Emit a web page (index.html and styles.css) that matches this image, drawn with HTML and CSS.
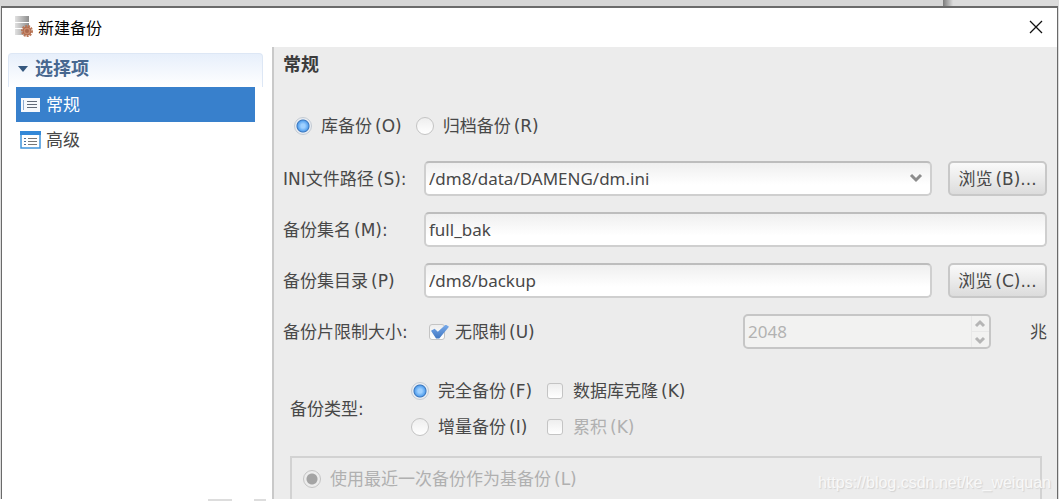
FILE: index.html
```
<!DOCTYPE html>
<html lang="zh-CN">
<head>
    <meta charset="UTF-8">
    <meta name="viewport" content="width=device-width, initial-scale=1.0">
    <title>新建备份</title>
    <link rel="stylesheet" href="styles.css">
</head>
<body>
    <div class="backdrop"></div>
    <div class="window">
        <header class="titlebar">
            <svg class="app-icon" width="20" height="22" viewBox="0 0 20 22" aria-hidden="true">
                <defs>
                    <linearGradient id="metal" x1="0" x2="1">
                        <stop offset="0" stop-color="#e2e2e2"/>
                        <stop offset="1" stop-color="#8d8d8d"/>
                    </linearGradient>
                </defs>
                <rect x="2" y="0" width="14" height="6" fill="url(#metal)"/>
                <rect x="2" y="7" width="14" height="5" fill="url(#metal)"/>
                <rect x="2" y="13" width="14" height="6" fill="url(#metal)"/>
                <circle cx="14" cy="15" r="4" fill="#c98a6c" stroke="#b0694a" stroke-width="1"/>
                <circle cx="14" cy="15" r="5" fill="none" stroke="#b97657" stroke-width="2" stroke-dasharray="2 1"/>
                <circle cx="14" cy="15" r="2" fill="#a9684d"/>
            </svg>
            <h1>新建备份</h1>
            <button class="close" type="button" aria-label="关闭">
                <svg width="14" height="14" viewBox="0 0 14 14"><path d="M1 1L13 13M13 1L1 13" fill="none" stroke="#111" stroke-width="1.3"/></svg>
            </button>
        </header>

        <div class="content">
            <nav class="sidebar">
                <h2>
                    <svg width="10" height="6" viewBox="0 0 10 6"><path d="M0 0H10L5 6Z" fill="#35587f"/></svg>
                    选择项
                </h2>
                <a class="item active" href="#general">
                    <svg width="21" height="18" viewBox="0 0 21 18">
                        <rect x="1" y="2" width="19" height="14" fill="#f6f8fc"/>
                        <path d="M3.5 4V14" stroke="#8fabd0"/>
                        <path d="M7 5.5H17M7 8.5H17M7 11.5H17" stroke="#626a78"/>
                    </svg>
                    常规
                </a>
                <a class="item" href="#advanced">
                    <svg width="21" height="18" viewBox="0 0 21 18">
                        <rect x="1" y="1" width="19" height="16" fill="#fff" stroke="#3f94dc" stroke-width="1.5"/>
                        <rect x="0" y="0" width="21" height="4" fill="#3388d8"/>
                        <path d="M4 7.5H6M4 10.5H6M4 13.5H6" stroke="#47709e"/>
                        <path d="M8 7.5H17M8 10.5H17M8 13.5H17" stroke="#777"/>
                    </svg>
                    高级
                </a>
            </nav>

            <main class="panel" id="general">
                <h2>常规</h2>

                <div class="choices">
                    <label class="choice"><input type="radio" name="target" checked><span>库备份<span class="key">(O)</span></span></label>
                    <label class="choice"><input type="radio" name="target"><span>归档备份<span class="key">(R)</span></span></label>
                </div>

                <div class="form">
                    <label for="ini">INI文件路径<span class="key">(S):</span></label>
                    <div class="field">
                        <div class="select">
                            <select id="ini"><option>/dm8/data/DAMENG/dm.ini</option></select>
                            <svg class="chevron" width="14" height="10" viewBox="0 0 14 10"><path d="M2 2L7 7L12 2" fill="none" stroke="#8c8c8c" stroke-width="3"/></svg>
                        </div>
                        <button class="browse" type="button">浏览<span class="key">(B)</span>...</button>
                    </div>

                    <label for="name">备份集名<span class="key">(M):</span></label>
                    <div class="field"><input class="text" id="name" type="text" value="full_bak"></div>

                    <label for="dir">备份集目录<span class="key">(P)</span></label>
                    <div class="field">
                        <input class="text" id="dir" type="text" value="/dm8/backup">
                        <button class="browse" type="button">浏览<span class="key">(C)</span>...</button>
                    </div>

                    <label for="size">备份片限制大小:</label>
                    <div class="field limit">
                        <label class="choice"><input type="checkbox" checked><span>无限制<span class="key">(U)</span></span></label>
                        <div class="spinner">
                            <input class="text" id="size" type="number" value="2048" disabled>
                            <svg class="arrows" width="18" height="31" viewBox="0 0 18 31">
                                <path d="M0.5 0V31M0 15.5H18" stroke="#e8e8e8"/>
                                <path d="M5 10L9 6L13 10M5 22L9 26L13 22" fill="none" stroke="#b5b5b5" stroke-width="3"/>
                            </svg>
                        </div>
                        <span class="unit">兆</span>
                    </div>
                </div>

                <div class="type">
                    <span>备份类型:</span>
                    <div class="type-grid">
                        <label class="choice"><input type="radio" name="type" checked><span>完全备份<span class="key">(F)</span></span></label>
                        <label class="choice"><input type="checkbox"><span>数据库克隆<span class="key">(K)</span></span></label>
                        <label class="choice"><input type="radio" name="type"><span>增量备份<span class="key">(I)</span></span></label>
                        <label class="choice"><input type="checkbox" disabled><span>累积<span class="key">(K)</span></span></label>
                    </div>
                </div>

                <div class="base">
                    <label class="choice"><input type="radio" name="base" checked disabled><span>使用最近一次备份作为基备份<span class="key">(L)</span></span></label>
                </div>
            </main>
        </div>
    </div>
    <div class="page-edge"></div>
    <div class="watermark">https://blog.csdn.net/ke_weiquan</div>
</body>
</html>
```

FILE: styles.css
```
* {
    box-sizing: border-box;
}
body {
    margin: 0;
    height: 100vh;
    overflow: hidden;
    display: flex;
    flex-direction: column;
    background-color: #dcdcdc;
    font-family: "DejaVu Sans", "Noto Sans CJK SC", sans-serif;
    font-size: 17px;
    line-height: 24px;
    color: #484848;
}
h1, h2 {
    margin: 0;
}
button, input, select {
    font: inherit;
    color: inherit;
}
.backdrop {
    height: 6px;
    flex: none;
    background: linear-gradient(90deg, #d6d6d6 89%, #777 89%, #dcdcdc 90%);
}
.window {
    flex: 1;
    min-height: 0;
    margin: 0 1px;
    display: flex;
    flex-direction: column;
    background-color: #fff;
    border: 1px solid #6a6a6a;
    border-width: 2px 1px 0;
}
.titlebar {
    height: 39px;
    flex: none;
    display: flex;
    align-items: center;
    padding: 0 13px 2px 11px;
    gap: 5px;
}
.titlebar h1 {
    flex: 1;
    font-family: "Noto Sans CJK SC", sans-serif;
    font-size: 16px;
    font-weight: 400;
    color: #000;
}
.close {
    display: flex;
    padding: 1px;
    border: none;
    background: none;
}
.content {
    flex: 1;
    min-height: 0;
    display: flex;
}
.sidebar {
    width: 270px;
    flex: none;
    padding: 6px 9px 0 6px;
}
.sidebar h2 {
    display: flex;
    align-items: center;
    gap: 7px;
    height: 34px;
    padding: 0 9px 4px;
    border: 1px solid #dde7f5;
    border-bottom: none;
    border-radius: 4px 4px 0 0;
    background: linear-gradient(#e7effb, #fff);
    font-size: 18px;
    color: #47678f;
}
.item {
    display: flex;
    align-items: center;
    gap: 5px;
    height: 35px;
    margin: 0 8px;
    padding: 0 4px;
    color: #484848;
    text-decoration: none;
}
.item.active {
    background-color: #3880cc;
    color: #fff;
}
.panel {
    flex: 1;
    min-width: 0;
    display: flex;
    flex-direction: column;
    padding: 6px 10px 0 9px;
    border-left: 2px solid #c9c9c9;
    background-color: #ececec;
}
.panel h2 {
    font-size: 18px;
    color: #3c3c3c;
}
.key {
    padding-left: 3px;
}
.choice {
    display: flex;
    align-items: center;
    gap: 9px;
    white-space: nowrap;
}
.choices {
    display: flex;
    gap: 14px;
    padding: 37px 0 23px 11px;
}
.choice input {
    appearance: none;
    flex: none;
    width: 18px;
    height: 18px;
    margin: 0;
    border: 1px solid #c4c4c4;
    background: linear-gradient(#eee, #fff);
}
.choice input[type="radio"] {
    border-radius: 50%;
}
.choice input[type="radio"]:checked {
    border-color: #c4cbd3;
    background: radial-gradient(circle at 50% 50%, #9ed0ff 0 2px, #5ba5f0 5px, #3a76bd 6px, #e9edf2 7px);
}
.choice input[type="radio"]:disabled {
    border-color: #c4c4c4;
    background: radial-gradient(circle, #a4a4a4 5px, #ececec 6px);
}
.choice input[type="checkbox"] {
    width: 16px;
    height: 16px;
    margin: 0 1px;
    border-radius: 3px;
}
.choice input[type="checkbox"]:checked::before {
    content: "";
    display: block;
    width: 18px;
    height: 14px;
    margin-left: 1px;
    background: linear-gradient(#78aaea, #3f75c0);
    clip-path: polygon(0 45%, 20% 30%, 38% 52%, 82% 0, 100% 16%, 46% 100%, 28% 100%);
}
.choice:has(:disabled) {
    color: #b0b0b0;
}
.form {
    display: grid;
    grid-template-columns: 141px 1fr;
    row-gap: 16px;
    align-items: center;
}
.field {
    display: flex;
    align-items: center;
    gap: 16px;
    min-width: 0;
}
.select, .spinner {
    position: relative;
    flex: 1;
}
.text, .select select {
    appearance: none;
    display: block;
    flex: 1;
    width: 100%;
    min-width: 0;
    height: 35px;
    padding: 0 3px;
    border: 2px solid #cfcfcf;
    border-top-color: #bdbdbd;
    border-radius: 5px;
    background: linear-gradient(#efefef, #fff 70%);
    font-family: "Noto Sans", sans-serif;
}
.chevron {
    position: absolute;
    right: 9px;
    top: 12px;
}
.browse {
    width: 99px;
    height: 35px;
    padding: 0;
    border: 2px solid #c8c8c8;
    border-radius: 5px;
    background: linear-gradient(#fafafa, #dcdcdc);
    white-space: nowrap;
}
.limit {
    padding-left: 4px;
    gap: 0;
}
.limit .choice {
    flex: 1;
}
.limit .spinner {
    flex: 0 0 248px;
}
.limit .text {
    background: #f2f2f1;
    border-color: #c6c6c6;
    color: #b2b2b2;
    appearance: textfield;
}
.arrows {
    position: absolute;
    right: 2px;
    top: 2px;
}
.unit {
    width: 56px;
    text-align: right;
}
.type {
    display: flex;
    align-items: center;
    padding: 30px 0 17px 7px;
}
.type > span {
    width: 121px;
}
.type-grid {
    display: grid;
    grid-template-columns: auto auto;
    gap: 12px 14px;
}
.base {
    flex: 1;
    margin: 0 5px 0 7px;
    padding: 9px 11px;
    border: 2px solid #d2d2d2;
    border-bottom: none;
}
.page-edge {
    height: 2px;
    flex: none;
    background: linear-gradient(90deg, #fff 208px, #ddd 208px 232px, #fff 232px 254px, #ddd 254px 266px, #fff 266px);
}
.watermark {
    position: absolute;
    right: 8px;
    bottom: 6px;
    font-family: "Liberation Sans", sans-serif;
    font-size: 16px;
    color: #f8f8f8;
    text-shadow: 1px 1px 1px #d2d2d2;
}
```
